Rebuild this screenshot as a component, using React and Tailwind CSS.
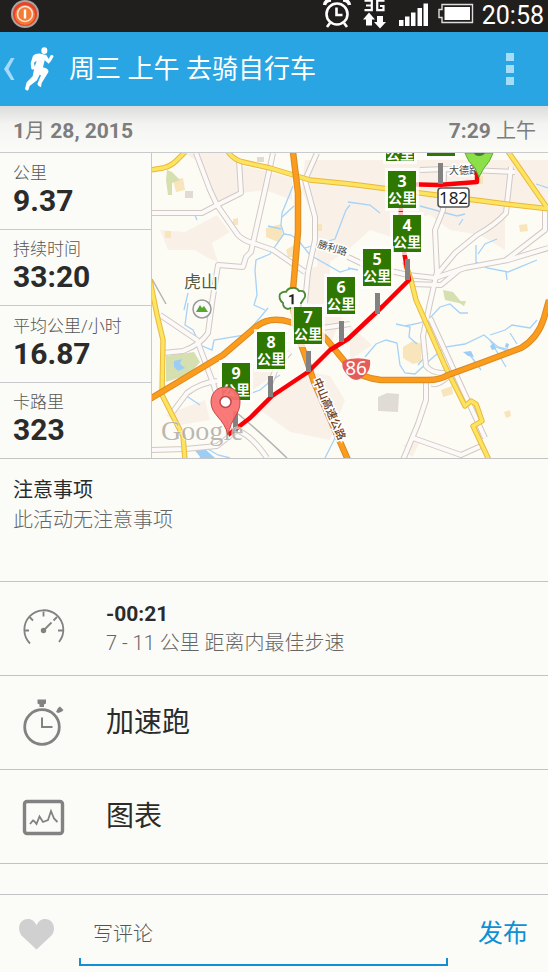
const stats = [
  { label: '公里', value: '9.37' },
  { label: '持续时间', value: '33:20' },
  { label: '平均公里/小时', value: '16.87' },
  { label: '卡路里', value: '323' },
];

// Kilometre flags: top-left corner of each sign on the map
const flags = [
  { km: 3, x: 388, y: 171 },
  { km: 4, x: 393, y: 215 },
  { km: 5, x: 363, y: 249 },
  { km: 6, x: 327, y: 277 },
  { km: 7, x: 294, y: 307 },
  { km: 8, x: 257, y: 332 },
  { km: 9, x: 222, y: 363 },
];

const posts = [
  [438, 163], [405, 259], [375, 293], [339, 321], [306, 351], [268, 376], [233, 411],
];

const whiteRoads = [
  'M196 153L210 190L217 205L238 235Q244 241 253 243L273 250L305 272',
  'M152 213H202L217 205L241 193L239 160',
  'M273 153L265 190L253 243L251 252L246 257L243 267L218 265L212 303L208 333Q200 345 183 351L163 353',
  'M317 153L305 180L315 217V240L308 272L305 303',
  'M160 315L197 340L213 383L220 405L235 430Q250 433 267 458',
  'M172 413L187 393Q200 383 217 381',
  'M152 450L185 449L217 446L235 432',
  'M511 167L506 213Q495 225 477 235L455 253L435 277',
  'M444 170L443 210L435 230L437 272L430 303L423 336L426 366Q432 374 448 373M426 380L426 400L418 424L403 460',
  'M348 257L365 265L408 275L435 278L465 268L508 260L548 248',
  'M411 284L441 285L458 271',
  'M506 260L545 230V205',
  'M420 170L445 169L515 172',
  'M413 438L461 455L481 446',
  'M430 318L485 438M322 328L350 324M270 384L277 366L290 352',
  'M432 384Q438 386 450 375',
];

const yellowRoads = [
  'M150 170L163 168Q171 166 176 161L185 152',
  'M228 152Q234 160 243 162L270 168L310 180L350 184L420 193L506 204L550 209',
  'M150 280L157 315L163 340L162 395L183 436L185 460',
  'M507 150L548 209',
  'M405 262L411 280L416 300L445 366L465 406L471 401L476 404L479 412L482 421L473 426L489 460',
];

const highways = [
  'M293 152L298 193V232L293 290Q292 325 305 355L314 382L348 460',
  'M150 399L223 355L257 326Q270 316 290 322Q315 328 327 340L350 368Q362 378 381 380H428Q440 380 448 375L481 363L521 348Q538 338 544 318L549 300',
];

const streams = [
  'M293 186L282 213L281 225L284 234L276 245L270 254L256 260L255 270L257 295L254 305L265 310',
  'M282 217L294 206M268 226L281 229M284 234L291 235L298 240L310 255L340 272L350 269',
  'M305 248L335 239L346 210L350 205',
  'M188 303L185 325L193 330L200 345L212 350L214 340L245 335L258 320L268 308',
  'M194 213L197 220M188 293L184 310',
  'M348 202L370 205L380 213M420 206L457 216L465 214M358 270L348 268',
  'M478 254L485 244L497 239M476 245V262L487 268L508 272L537 260M506 272L507 280',
  'M536 184L548 188M459 225L463 219',
  'M365 357L376 344L386 340L397 343L400 365L405 373L415 374L430 360L445 347L465 344L484 335L498 347L510 350',
  'M396 324L410 327L409 337L417 344M405 326L420 323L430 318L440 307L450 304L460 313L468 313',
  'M490 335L505 330L512 325L530 328L537 320M490 340L506 367M510 333L517 344',
  'M238 398L260 390L272 380L280 375M325 458L335 438L333 430',
  'M200 458L206 448L218 455L230 458M185 395L200 405',
  'M493 346L510 352M470 355L481 370M418 365L428 353',
];

function StatusBar() {
  return (
    <div className="flex h-8 items-center justify-between bg-[#211f1e] pr-1 pl-2 text-white">
      <svg width="34" height="32" viewBox="0 0 34 32" aria-hidden="true">
        <circle cx="17" cy="14" r="14" fill="#aaa39e" />
        <circle cx="17" cy="14" r="12" fill="#e8422a" />
        <circle cx="17" cy="15" r="10" fill="#f47b36" />
        <circle cx="17" cy="14" r="7.5" fill="none" stroke="#ffe3d5" strokeWidth="1.6" />
        <path d="M17 9.500v9" stroke="#fff" strokeWidth="2.400" />
      </svg>
      <div className="flex items-center">
        <svg width="160" height="32" viewBox="322 -1 160 32" aria-hidden="true">
          <g fill="none" stroke="#fff" strokeWidth="2.600">
            <circle cx="337" cy="13" r="10.500" />
            <path d="M336.500 6.500V14h6M330 22l-3 4M344 22l3 4" />
            <path d="M324.500 4Q325.500 -1 331 -1M349.500 4Q348.500 -1 343 -1" strokeWidth="3.500" />
          </g>
          <path d="M364.500 -.3h7.300v9.500h-7.300M366 4.500h5.500M384.500 -.3h-7.300v9.500h6.300V5h-3.500" fill="none" stroke="#fff" strokeWidth="2.200" />
          <path d="M369 11.500l6 7h-3v6h-6v-6h-3zM380 27.500l-6-6.500h3v-6h6v6h3z" fill="#fff" />
          <path d="M399 19h4.500v6H399zM405 15.500h4.500V25H405zM411 11.500h4.500V25H411zM417.500 7h4.500v18h-4.500zM423.500 2.500h4.500V25h-4.500z" fill="#fff" />
          <path d="M442 3.500h30.500v18H442v-5h-3v-8h3z" fill="none" stroke="#ddd" strokeWidth="1.400" />
          <path d="M444.500 6h25.500v13h-25.500z" fill="#fff" />
        </svg>
        <span className="text-[25px] leading-7">20:58</span>
      </div>
    </div>
  );
}

function Header() {
  return (
    <header className="flex h-[74px] items-center bg-[#29a5e3] pr-[22px] text-white">
      <button type="button" aria-label="返回" className="flex items-center">
        <svg width="69" height="74" viewBox="0 32 69 74" aria-hidden="true">
          <path d="M14.500 58H11L4 69l7 11h3.500L8.500 69z" fill="#a5dafa" />
          <g transform="scale(.33333)" fill="#fff">
            <ellipse cx="133" cy="152" rx="9" ry="10" />
            <path d="M122 161Q106 160 99 167L92 190L94 206Q100 212 105 204L102 188L110 182L103 204L98 229L80 247L75 266Q77 273 85 271L89 258L111 241L119 224L123 226L112 252L116 258L123 262L125 249L145 217Q147 209 138 205L129 202L134 181L146 191Q154 184 161 169Q157 163 152 166L146 177L139 165Z" />
          </g>
        </svg>
      </button>
      <h1 className="flex-1 text-[26px] leading-8">周三 上午 去骑自行车</h1>
      <button type="button" aria-label="更多选项" className="flex w-8 flex-col items-center gap-1">
        <span className="size-2 bg-[#a5dcf6]" />
        <span className="size-2 bg-[#a5dcf6]" />
        <span className="size-2 bg-[#a5dcf6]" />
      </button>
    </header>
  );
}

function RouteMap() {
  return (
    <svg viewBox="152 153 396 305" preserveAspectRatio="xMidYMid slice" className="h-full w-full" role="img" aria-label="路线地图">
      <rect x="0" y="0" width="800" height="700" fill="#fcfcf5" />
      <g fill="#f9f1e8">
        <path d="M184 153H228L243 166L270 172L292 178V200L265 190L241 193L217 205L196 160ZM160 230L185 232L217 215L230 232L212 243L218 262L208 258L195 250L168 250ZM305 160H548V205L505 207V250L480 235L450 230L430 215L400 220V240L370 230L348 250L318 270L312 215L302 190Z" />
        <path d="M305 270L330 262V285L350 300L330 345L310 320ZM277 395L310 372L330 376L345 400L330 440L290 432L260 410ZM165 415L205 400L210 420L180 425ZM350 325L372 345L350 360ZM403 445L422 438L412 458ZM245 375L262 360L275 375L250 392Z" />
      </g>
      <g fill="#f8e5bb">
        <path d="M173 180L183 178L185 190L176 192ZM165 231h6v7h-6zM233 219l5-1v7h-5zM266 228l15-4 2 12-5 6-12-5zM286 250l8-5v12h-6zM317 224h5v7h-5zM403 347l10-6 9 3-1 18-8 2-10-6zM441 390l11-4 1 8-10 3zM504 412l6-2 1 6-5 2zM519 225l8-1 1 7-8 1zM475 176h8v8h-8z" />
      </g>
      <g fill="#d5dfb0">
        <path d="M167 170l5 2 8 8-8 3v12h-4l-2-15zM166 356l28-4 6 10-10 12-24 8zM443 290l10 2 10 12-18-4zM456 301l10 0-2 5z" />
      </g>
      <path d="M174 361l8-2-2 5 5 4-7 3-4-4z" fill="#9ccdf5" />
      <path d="M185 191h8v7h-8zM257 157h7v5h-7zM378 397l9-4 12 1-1 18-20-1z" fill="#e0dbd5" />
      <g fill="none" stroke="#a6d2f8" strokeWidth="1.300">
        {streams.map((d) => <path key={d} d={d} />)}
      </g>
      <path d="M463 352l8-1 3 6-6-1zM490 346l4-3 2 6-4 1zM506 343l3 1-1 4-3-1zM193 448l12 1 10 9h-14z" fill="#9ccdf5" />
      <path d="M152 279L166 304M237 413Q260 432 287 458" fill="none" stroke="#b6b3b3" strokeWidth="1.500" />
      <g fill="none" strokeLinejoin="round">
        <g stroke="#d3c8c3" strokeWidth="6">{whiteRoads.map((d) => <path key={d} d={d} />)}</g>
        <g stroke="#fbfaf8" strokeWidth="4">{whiteRoads.map((d) => <path key={d} d={d} />)}</g>
        <g stroke="#ecb73c" strokeWidth="5.400">{yellowRoads.map((d) => <path key={d} d={d} />)}</g>
        <g stroke="#fbe560" strokeWidth="3.400">{yellowRoads.map((d) => <path key={d} d={d} />)}</g>
        <g stroke="#d98a24" strokeWidth="6.500">{highways.map((d) => <path key={d} d={d} />)}</g>
        <g stroke="#fb9c1c" strokeWidth="4.500">{highways.map((d) => <path key={d} d={d} />)}</g>
      </g>

      <g fill="#4b4943" stroke="#fff" strokeWidth="3" paintOrder="stroke">
        <text x="184" y="288" fontSize="17" fill="#4f5b3c">虎山</text>
        <text x="449" y="174" fontSize="10">大德路</text>
        <text x="317" y="247" fontSize="10" transform="rotate(17 317 247)">勝利路</text>
        <text x="313" y="380" fontSize="11" fontWeight="500" fill="#70401c" transform="rotate(67 313 380)">中山高速公路</text>
      </g>

      <circle cx="202" cy="309" r="9" fill="#fafafa" stroke="#999" strokeWidth="1.500" />
      <path d="M196 312l4-7 2 3 2-2 4 6z" fill="#57a532" />
      <path d="M292 288Q297 287 299 291Q306 290 305 297Q303 300 301 303Q302 309 296 309Q292 307 288 309Q283 308 283 303Q278 299 280 294Q283 291 286 292Q288 288 292 288Z" fill="#fff" stroke="#4d8b35" strokeWidth="1.800" />
      <text x="292" y="305" textAnchor="middle" fontSize="14" fontWeight="700" fill="#222">1</text>
      <rect x="438" y="188" width="31" height="19" rx="3" fill="#fff" stroke="#555" strokeWidth="1.600" />
      <text x="453.500" y="204" textAnchor="middle" fontSize="17" fill="#222" className="font-['Noto_Sans']">182</text>
      <path d="M343 361Q356 356 370 360Q371 368 367 373Q361 380 356 380Q350 379 345 372Q341 367 343 361Z" fill="#e45d5b" />
      <text x="356" y="375" textAnchor="middle" fontSize="19" fill="#fff" className="font-['Noto_Sans']">86</text>

      <path d="M477 172V182L438 185L402 184L400 230L405 257L409 280L383 306L348 339L330 350L308 372L272 396L250 418L228 435" fill="none" stroke="#f90006" strokeWidth="4.500" strokeLinejoin="round" />
      <path d="M465 153H493Q490 162 484 168L479 177L475 168Q468 162 465 153Z" fill="#8be04a" stroke="#60aa32" />
      <path d="M474 153h11q-2 3-6 3t-5-3z" fill="#477c28" />
      <g fill="#828282">
        {posts.map(([x, y]) => <rect key={x} x={x} y={y} width="5" height="21" />)}
      </g>
      <path d="M424 150h34v9h-34zM383 150h34v14h-34z" fill="#fff" fillOpacity=".75" />
      <path d="M427 150h28v6h-28zM386 150h28v11h-28z" fill="#2e7700" />
      <text x="400" y="159" textAnchor="middle" fontSize="14" fontWeight="700" fill="#fff">公里</text>
      {flags.map(({ km, x, y }) => (
        <g key={km} textAnchor="middle" fill="#fff">
          <rect x={x - 3} y={y - 3} width="34" height="43" fill="#fff" fillOpacity=".75" />
          <rect x={x} y={y} width="28" height="37" fill="#2e7700" />
          <text x={x + 14} y={y + 16} fontSize="16" fontWeight="700" className="font-['Noto_Sans']">{km}</text>
          <text x={x + 14} y={y + 32} fontSize="14" fontWeight="700">公里</text>
        </g>
      ))}
      <text x="161" y="440" fontSize="28" fill="#aaa59d" fillOpacity=".8" stroke="#fff" strokeOpacity=".7" paintOrder="stroke" className="font-['Liberation_Serif']">Google</text>
      <path d="M225.500 387C216 387 211 394 211 402C211 415 224 418 228 435C231 418 240 415 240 402C240 394 235 387 225.500 387Z" fill="#fa7070" fillOpacity=".93" stroke="#c74646" />
      <circle cx="225.500" cy="402" r="5.500" fill="#fff" stroke="#bf4949" strokeWidth="1.500" />
    </svg>
  );
}

function GaugeIcon() {
  return (
    <svg width="44" height="44" viewBox="21 608 44 44" fill="none" stroke="#828282" strokeWidth="1.800" aria-hidden="true">
      <path d="M30 644.500A19.500 19.500 0 1 1 59 643" />
      <path d="M43.500 612.500v5M24 631.500h5M63 631.500h-5M29.500 618l3.500 3.500M57 618l-3.500 3.500" />
      <path d="M43.500 631.500l8-8" />
      <circle cx="43.500" cy="631.500" r="1.800" fill="#828282" />
    </svg>
  );
}

function StopwatchIcon() {
  return (
    <svg width="44" height="50" viewBox="21 698 44 50" fill="none" aria-hidden="true">
      <circle cx="42" cy="727" r="17.300" stroke="#828282" strokeWidth="2.800" />
      <path d="M42 717.500v9.500h10.500" stroke="#828282" strokeWidth="2" />
      <path d="M37.500 699.500h8.500v4l-2 1v2.500h-4.500v-2.500l-2-1zM56 712l2-4 2-1.500 3.500 3.500-1.500 1.500-3.500 1.500z" fill="#828282" />
    </svg>
  );
}

function ChartIcon() {
  return (
    <svg width="44" height="38" viewBox="21 797 44 38" fill="none" stroke="#828282" aria-hidden="true">
      <rect x="24.500" y="800.500" width="38" height="32" rx="2.500" strokeWidth="3.400" />
      <path d="M30 823l3-3.500 1.500 1 2 2.500 3-7.500 3.500 5.500 5-2 3-9 3 7.500 3.500 3.500" strokeWidth="1.800" />
    </svg>
  );
}

export default function App() {
  return (
    <div className="min-h-screen bg-[#fbfcf8] font-[Roboto,'Noto_Sans_CJK_SC',sans-serif] text-[#2b2b2b]">
      <StatusBar />
      <Header />
      <main>
        <div className="flex h-[47px] items-center justify-between border-b border-[#c9cacd] bg-linear-to-b from-[#dcdcdc] via-[#f4f4f2] via-40% to-[#fbfbf8] pt-1 pr-3 pl-[13px] text-[21px] leading-7 text-[#7d7d7d]">
          <p><b>1</b><span className="text-[20px]">月</span> <b>28, 2015</b></p>
          <p><b>7:29</b> <span className="text-[20px]">上午</span></p>
        </div>
        <section className="flex h-[306px] border-b border-[#c4c4c4]">
          <dl className="flex w-[152px] shrink-0 flex-col divide-y divide-[#c9c9cd] border-r border-[#c9c9cd]">
            {stats.map(({ label, value }) => (
              <div key={label} className="flex flex-1 flex-col justify-center pb-1 pl-[13px]">
                <dt className="text-[17px] leading-6 font-light whitespace-nowrap text-[#555]">{label}</dt>
                <dd className="text-[30px] leading-8 font-bold">{value}</dd>
              </div>
            ))}
          </dl>
          <div className="min-w-0 flex-1">
            <RouteMap />
          </div>
        </section>
        <section className="h-[123px] border-b border-[#c4c4c4] px-[13px] pt-4 text-[20px]">
          <h2 className="leading-[30px]">注意事项</h2>
          <p className="leading-[30px] font-light text-[#666]">此活动无注意事项</p>
        </section>
        <ul className="divide-y divide-[#c2c2c6] border-b border-[#c2c2c6]">
          <li className="flex h-[94px] items-center pl-[21px]">
            <span className="w-[85px] shrink-0"><GaugeIcon /></span>
            <div>
              <p className="text-[21px] leading-7 font-bold">-00:21</p>
              <p className="text-[20px] leading-[30px] font-light text-[#666]">7 - 11 公里 距离内最佳步速</p>
            </div>
          </li>
          <li>
            <button type="button" className="flex h-[93px] w-full items-center pl-[21px] text-left text-[28px]">
              <span className="w-[85px] shrink-0"><StopwatchIcon /></span>
              加速跑
            </button>
          </li>
          <li>
            <button type="button" className="flex h-[93px] w-full items-center pl-[21px] text-left text-[28px]">
              <span className="w-[85px] shrink-0"><ChartIcon /></span>
              图表
            </button>
          </li>
          <li className="h-[30px]" aria-hidden="true" />
        </ul>
        <form className="flex h-[77px] items-center pr-5 pl-[18px]" onSubmit={(e) => e.preventDefault()}>
          <button type="button" aria-label="赞" className="mr-6 shrink-0">
            <svg width="37" height="32" viewBox="18 919 37 32" aria-hidden="true">
              <path d="M36.500 950.500L21.500 936.500C17 931 18.500 920 28 920C32 920 35 922.500 36.500 926.500C38 922.500 41 920 45 920C54 920 56.500 931 51.500 936.500Z" fill="#d0d0d0" />
            </svg>
          </button>
          <div className="flex min-w-0 flex-1 flex-col self-end pb-1.5">
            <input
              aria-label="写评论"
              placeholder="写评论"
              className="h-12 w-full bg-transparent px-3.5 text-[20px] font-light outline-none placeholder:text-[#555]"
            />
            <span className="h-2 border-x-2 border-b-2 border-[#0f8fd4]" />
          </div>
          <button type="submit" className="ml-[30px] shrink-0 text-[25px] text-[#0f8fd4]">发布</button>
        </form>
      </main>
    </div>
  );
}
